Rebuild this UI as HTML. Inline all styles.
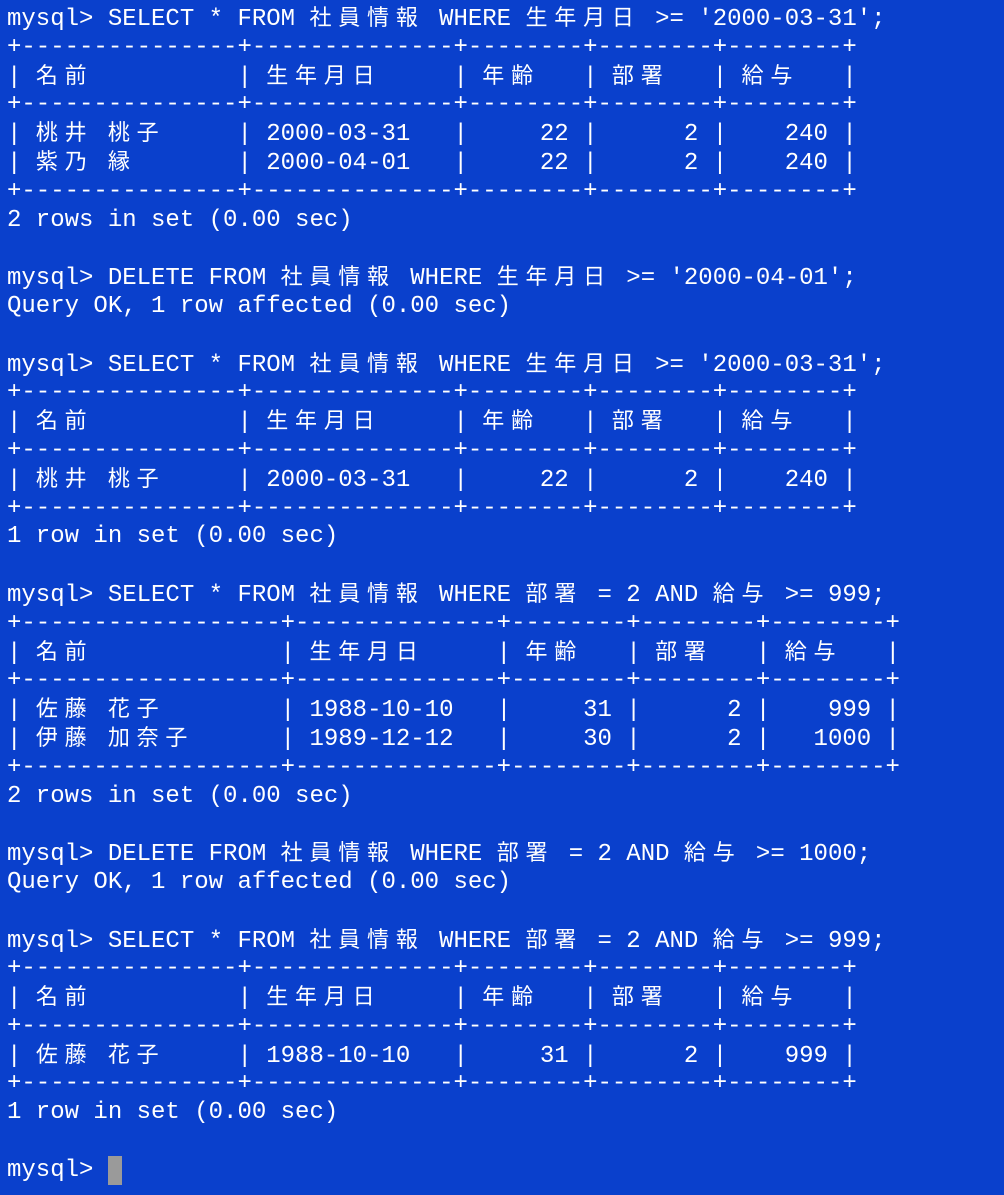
<!DOCTYPE html>
<html><head><meta charset="utf-8"><style>
html,body{margin:0;padding:0;background:#0a40cc;width:1004px;height:1195px;overflow:hidden}
#t{padding:5px 0 0 7px;color:#fff;font-family:"Liberation Mono","DejaVu Sans Mono",monospace;font-size:24px}
.l{height:28.8px;line-height:28.8px;white-space:pre;overflow:visible}
.c{font-family:"Noto Sans CJK JP","Liberation Sans",sans-serif;font-size:22px;letter-spacing:6.8px;line-height:1}
.cur{display:inline-block;width:14px;height:29px;background:#9a9a9a;vertical-align:top;margin-top:-1px}
</style></head><body><div id="t">
<div class="l">mysql&gt; SELECT * FROM <span class="c">社員情報</span> WHERE <span class="c">生年月日</span> &gt;= '2000-03-31';</div>
<div class="l">+---------------+--------------+--------+--------+--------+</div>
<div class="l">| <span class="c">名前</span>          | <span class="c">生年月日</span>     | <span class="c">年齢</span>   | <span class="c">部署</span>   | <span class="c">給与</span>   |</div>
<div class="l">+---------------+--------------+--------+--------+--------+</div>
<div class="l">| <span class="c">桃井</span> <span class="c">桃子</span>     | 2000-03-31   |     22 |      2 |    240 |</div>
<div class="l">| <span class="c">紫乃</span> <span class="c">縁</span>       | 2000-04-01   |     22 |      2 |    240 |</div>
<div class="l">+---------------+--------------+--------+--------+--------+</div>
<div class="l">2 rows in set (0.00 sec)</div>
<div class="l"> </div>
<div class="l">mysql&gt; DELETE FROM <span class="c">社員情報</span> WHERE <span class="c">生年月日</span> &gt;= '2000-04-01';</div>
<div class="l">Query OK, 1 row affected (0.00 sec)</div>
<div class="l"> </div>
<div class="l">mysql&gt; SELECT * FROM <span class="c">社員情報</span> WHERE <span class="c">生年月日</span> &gt;= '2000-03-31';</div>
<div class="l">+---------------+--------------+--------+--------+--------+</div>
<div class="l">| <span class="c">名前</span>          | <span class="c">生年月日</span>     | <span class="c">年齢</span>   | <span class="c">部署</span>   | <span class="c">給与</span>   |</div>
<div class="l">+---------------+--------------+--------+--------+--------+</div>
<div class="l">| <span class="c">桃井</span> <span class="c">桃子</span>     | 2000-03-31   |     22 |      2 |    240 |</div>
<div class="l">+---------------+--------------+--------+--------+--------+</div>
<div class="l">1 row in set (0.00 sec)</div>
<div class="l"> </div>
<div class="l">mysql&gt; SELECT * FROM <span class="c">社員情報</span> WHERE <span class="c">部署</span> = 2 AND <span class="c">給与</span> &gt;= 999;</div>
<div class="l">+------------------+--------------+--------+--------+--------+</div>
<div class="l">| <span class="c">名前</span>             | <span class="c">生年月日</span>     | <span class="c">年齢</span>   | <span class="c">部署</span>   | <span class="c">給与</span>   |</div>
<div class="l">+------------------+--------------+--------+--------+--------+</div>
<div class="l">| <span class="c">佐藤</span> <span class="c">花子</span>        | 1988-10-10   |     31 |      2 |    999 |</div>
<div class="l">| <span class="c">伊藤</span> <span class="c">加奈子</span>      | 1989-12-12   |     30 |      2 |   1000 |</div>
<div class="l">+------------------+--------------+--------+--------+--------+</div>
<div class="l">2 rows in set (0.00 sec)</div>
<div class="l"> </div>
<div class="l">mysql&gt; DELETE FROM <span class="c">社員情報</span> WHERE <span class="c">部署</span> = 2 AND <span class="c">給与</span> &gt;= 1000;</div>
<div class="l">Query OK, 1 row affected (0.00 sec)</div>
<div class="l"> </div>
<div class="l">mysql&gt; SELECT * FROM <span class="c">社員情報</span> WHERE <span class="c">部署</span> = 2 AND <span class="c">給与</span> &gt;= 999;</div>
<div class="l">+---------------+--------------+--------+--------+--------+</div>
<div class="l">| <span class="c">名前</span>          | <span class="c">生年月日</span>     | <span class="c">年齢</span>   | <span class="c">部署</span>   | <span class="c">給与</span>   |</div>
<div class="l">+---------------+--------------+--------+--------+--------+</div>
<div class="l">| <span class="c">佐藤</span> <span class="c">花子</span>     | 1988-10-10   |     31 |      2 |    999 |</div>
<div class="l">+---------------+--------------+--------+--------+--------+</div>
<div class="l">1 row in set (0.00 sec)</div>
<div class="l"> </div>
<div class="l">mysql&gt; <span class="cur"></span></div>
</div></body></html>
